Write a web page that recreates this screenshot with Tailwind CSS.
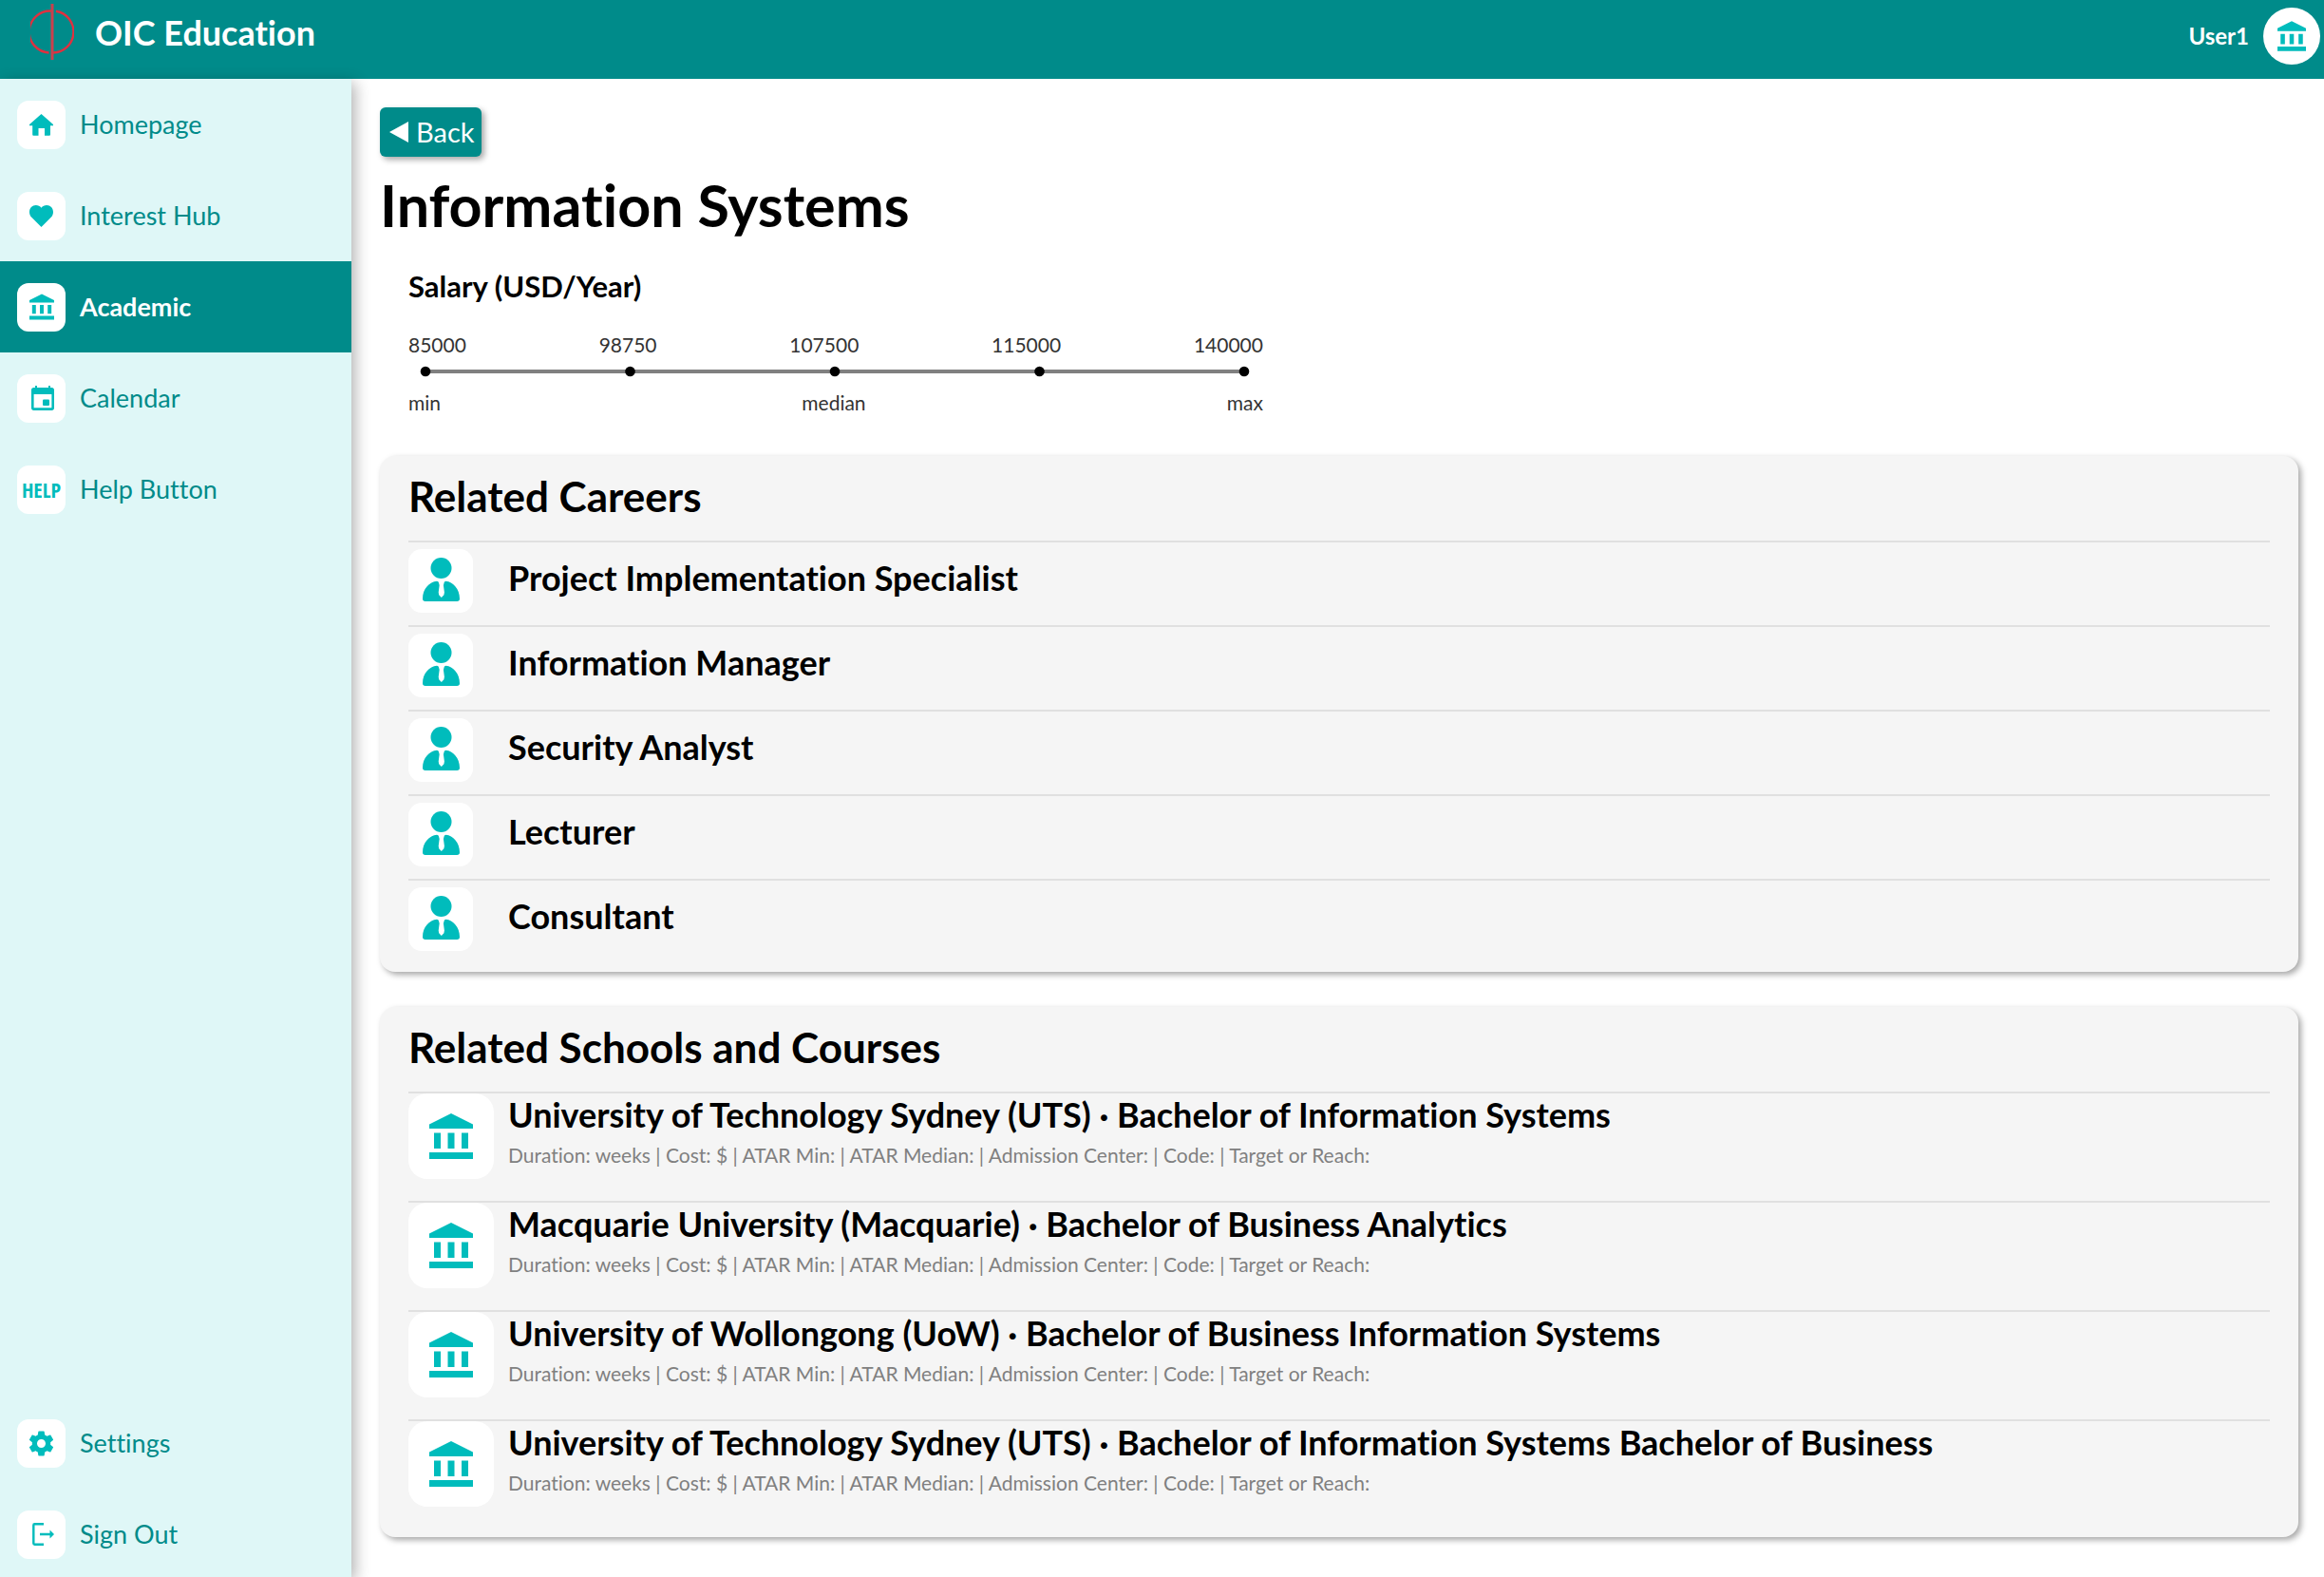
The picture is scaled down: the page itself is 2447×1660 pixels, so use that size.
<!DOCTYPE html>
<html lang="en">
<head>
<meta charset="utf-8">
<meta name="viewport" content="width=device-width, initial-scale=1">
<title>OIC Education</title>
<script src="https://cdn.jsdelivr.net/npm/@tailwindcss/browser@4"></script>
</head>
<body class="flex min-h-screen flex-col overflow-hidden bg-white font-['Lato',sans-serif] text-black [font-variant-ligatures:none]">

<!-- Shared icons -->
<svg class="hidden" aria-hidden="true">
  <symbol id="bank" viewBox="0 0 46 48">
    <path fill="#00bcbc" d="M23 0 46 11.500V16H0v-4.500zM5 20.500h7V37H5zM19.500 20.500h7V37h-7zM34 20.500h7V37h-7zM0 41h46v7H0z"/>
  </symbol>
  <symbol id="person" viewBox="0 0 39 46">
    <circle cx="19.500" cy="11" r="11" fill="#00bcbc"/>
    <path fill="#00bcbc" d="M15 24.800c1 0 1.800.7 2 1.700l.7 2.500-1 7.500.5 2.800 2.600 2.700 2.600-2.700.5-2.800-1-7.500.7-2.500c.2-1 1-1.700 2-1.700C32 25.500 39 33 39 43.200c0 1.700-1.100 2.800-2.800 2.800H2.800C1.100 46 0 44.900 0 43.200 0 33 7 25.500 15 24.800z"/>
  </symbol>
</svg>

<header class="flex h-[83px] shrink-0 justify-between bg-[#008b8a] pr-1 pl-8 text-white">
  <a href="#" class="flex h-[68px] items-center gap-[22px]">
    <svg class="h-[60px] w-[46px]" viewBox="0 0 46 60" fill="none" aria-hidden="true">
      <path d="M22 7.500A22 22 0 0 0 19.500 51.500M27 7.800A22 22 0 0 1 24 51.500" stroke="#e0303f" stroke-width="2.400"/>
      <path d="M23 0v59" stroke="#c9404d" stroke-width="3"/>
    </svg>
    <span class="text-4xl font-bold">OIC Education</span>
  </a>
  <a href="#" class="flex h-[76px] items-center gap-[15px]">
    <span class="text-2xl font-bold">User1</span>
    <span class="flex size-[60px] items-center justify-center rounded-full bg-white">
      <svg class="h-8 w-[30px]" aria-hidden="true"><use href="#bank"/></svg>
    </span>
  </a>
</header>

<div class="flex flex-1">
  <nav class="relative z-10 flex w-[370px] shrink-0 flex-col justify-between bg-[#dff7f7] text-[27px] text-[#008b8a] shadow-[4px_4px_15px_rgba(0,0,0,0.3)]">
    <ul>
      <li><a href="#" class="flex h-24 items-center gap-[15px] pl-[18px]">
        <span class="flex size-[51px] items-center justify-center rounded-xl bg-white">
          <svg class="h-[23px] w-[25px]" viewBox="0 0 25 23" fill="#00bcbc" aria-hidden="true"><path d="M12.500 0 25 11v1.200h-3V21.500c0 .8-.5 1.300-1.300 1.300H16V15H9.500v7.800H4.500c-.8 0-1.300-.5-1.300-1.300V12.200H0V11z"/></svg>
        </span>Homepage</a></li>
      <li><a href="#" class="flex h-24 items-center gap-[15px] pl-[18px]">
        <span class="flex size-[51px] items-center justify-center rounded-xl bg-white">
          <svg class="h-[23px] w-[25px]" viewBox="0 0 25 23" fill="#00bcbc" aria-hidden="true"><path d="M12.500 23 2.300 12.800C.8 11.300 0 9.300 0 7.200 0 3 3 0 6.800 0c2.300 0 4.400 1 5.700 2.800C13.800 1 15.900 0 18.200 0 22 0 25 3 25 7.200c0 2.100-.8 4.100-2.300 5.600z"/></svg>
        </span>Interest Hub</a></li>
      <li><a href="#" aria-current="page" class="flex h-24 items-center gap-[15px] bg-[#008b8a] pl-[18px] font-bold text-white">
        <span class="flex size-[51px] items-center justify-center rounded-xl bg-white">
          <svg class="h-7 w-[26px]" aria-hidden="true"><use href="#bank"/></svg>
        </span>Academic</a></li>
      <li><a href="#" class="flex h-24 items-center gap-[15px] pl-[18px]">
        <span class="flex size-[51px] items-center justify-center rounded-xl bg-white pl-0.5">
          <svg class="h-[26px] w-6" viewBox="0 0 24 26" fill="#00bcbc" aria-hidden="true"><path fill-rule="evenodd" d="M4 0h2v2h12V0h2v2h1.500C23 2 24 3 24 4.500v19c0 1.500-1 2.500-2.500 2.500h-19C1 26 0 25 0 23.500v-19C0 3 1 2 2.500 2H4zM2.600 9v14.200h18.800V9z"/><rect x="12" y="14.500" width="7" height="6.500" rx="1"/></svg>
        </span>Calendar</a></li>
      <li><a href="#" class="flex h-24 items-center gap-[15px] pl-[18px]">
        <span class="flex size-[51px] items-center justify-center rounded-xl bg-white font-['Open_Sans_Condensed','Open_Sans',sans-serif] text-[22px] font-extrabold text-[#00bcbc]" aria-hidden="true">HELP</span>Help Button</a></li>
    </ul>
    <ul class="-mb-[3px]">
      <li><a href="#" class="flex h-24 items-center gap-[15px] pl-[18px]">
        <span class="flex size-[51px] items-center justify-center rounded-xl bg-white">
          <svg class="size-[31px]" viewBox="0 0 24 24" fill="#00bcbc" aria-hidden="true"><path d="M19.430 12.980c.04-.32.07-.64.07-.98s-.03-.66-.07-.98l2.110-1.650c.19-.15.24-.42.12-.64l-2-3.460c-.12-.22-.39-.3-.61-.22l-2.490 1c-.52-.4-1.080-.73-1.690-.98l-.38-2.650C14.460 2.180 14.250 2 14 2h-4c-.25 0-.46.18-.49.42l-.38 2.650c-.61.25-1.170.59-1.690.98l-2.490-1c-.23-.09-.49 0-.61.22l-2 3.460c-.13.22-.07.49.12.64l2.110 1.650c-.04.32-.07.65-.07.98s.03.66.07.98l-2.110 1.650c-.19.15-.24.42-.12.64l2 3.460c.12.22.39.3.61.22l2.490-1c.52.4 1.080.73 1.690.98l.38 2.650c.03.24.24.42.49.42h4c.25 0 .46-.18.49-.42l.38-2.650c.61-.25 1.170-.59 1.690-.98l2.490 1c.23.09.49 0 .61-.22l2-3.460c.12-.22.07-.49-.12-.64l-2.110-1.650zM12 15.500c-1.930 0-3.500-1.570-3.500-3.500s1.570-3.500 3.500-3.500 3.500 1.570 3.500 3.500-1.570 3.500-3.500 3.500z"/></svg>
        </span>Settings</a></li>
      <li><a href="#" class="flex h-24 items-center gap-[15px] pl-[18px]">
        <span class="flex size-[51px] items-center justify-center rounded-xl bg-white pl-1">
          <svg class="h-6 w-[23px]" viewBox="0 0 23 24" fill="none" stroke="#00bcbc" stroke-width="2.400" aria-hidden="true"><path d="M12 1.200H2.500c-.8 0-1.200.5-1.200 1.200v19.200c0 .7.4 1.200 1.200 1.200H12M8 12h11"/><path d="M18.500 7.500 23 12l-4.500 4.500z" fill="#00bcbc" stroke="none"/></svg>
        </span>Sign Out</a></li>
    </ul>
  </nav>

  <main class="min-w-0 flex-1 pt-[30px] pr-[27px] pb-10 pl-[30px]">
    <button type="button" class="flex h-[52px] items-center gap-2 rounded-md bg-[#008b8a] pr-[7px] pl-[10px] text-[29px]/[50px] text-white shadow-[3px_3px_6px_rgba(0,0,0,0.35)]">
      <svg class="h-[22px] w-5" viewBox="0 0 20 22" fill="#fff" aria-hidden="true"><path d="M20 0v22L0 11z"/></svg>Back
    </button>

    <h1 class="mt-[15px] text-[61px]/[72px] font-bold">Information Systems</h1>

    <section class="mt-[31px] max-w-[960px] px-[30px] text-[21px]/[26px] text-[#333]">
      <h2 class="text-[31px]/[36px] font-bold text-black">Salary (USD/Year)</h2>
      <div class="mt-[31px] flex justify-between"><span>85000</span><span>98750</span><span>107500</span><span>115000</span><span>140000</span></div>
      <svg class="mt-[9px] h-3 w-full" viewBox="0 0 900 12" aria-hidden="true">
        <path d="M18 6h862" stroke="#808080" stroke-width="4"/>
        <circle cx="18" cy="6" r="5.300"/><circle cx="233.500" cy="6" r="5.300"/><circle cx="449" cy="6" r="5.300"/><circle cx="664.500" cy="6" r="5.300"/><circle cx="880" cy="6" r="5.300"/>
      </svg>
      <div class="mt-[14px] flex justify-between"><span>min</span><span>median</span><span>max</span></div>
    </section>

    <section class="mt-[43px] rounded-2xl bg-[#f5f5f5] px-[30px] pb-[9px] shadow-[3px_3px_6px_rgba(0,0,0,0.35)]">
      <h2 class="mb-[5px] text-[44px]/[84px] font-bold">Related Careers</h2>
      <ul class="text-4xl/[74px] font-bold">
        <li class="flex h-[89px] gap-[37px] border-t-2 border-[#e0e0e0]">
          <span class="mt-[7px] flex h-[67px] w-[68px] justify-center rounded-[14px] bg-white pt-[9px]"><svg class="h-[46px] w-[39px]" aria-hidden="true"><use href="#person"/></svg></span>
          <h3>Project Implementation Specialist</h3>
        </li>
        <li class="flex h-[89px] gap-[37px] border-t-2 border-[#e0e0e0]">
          <span class="mt-[7px] flex h-[67px] w-[68px] justify-center rounded-[14px] bg-white pt-[9px]"><svg class="h-[46px] w-[39px]" aria-hidden="true"><use href="#person"/></svg></span>
          <h3>Information Manager</h3>
        </li>
        <li class="flex h-[89px] gap-[37px] border-t-2 border-[#e0e0e0]">
          <span class="mt-[7px] flex h-[67px] w-[68px] justify-center rounded-[14px] bg-white pt-[9px]"><svg class="h-[46px] w-[39px]" aria-hidden="true"><use href="#person"/></svg></span>
          <h3>Security Analyst</h3>
        </li>
        <li class="flex h-[89px] gap-[37px] border-t-2 border-[#e0e0e0]">
          <span class="mt-[7px] flex h-[67px] w-[68px] justify-center rounded-[14px] bg-white pt-[9px]"><svg class="h-[46px] w-[39px]" aria-hidden="true"><use href="#person"/></svg></span>
          <h3>Lecturer</h3>
        </li>
        <li class="flex h-[89px] gap-[37px] border-t-2 border-[#e0e0e0]">
          <span class="mt-[7px] flex h-[67px] w-[68px] justify-center rounded-[14px] bg-white pt-[9px]"><svg class="h-[46px] w-[39px]" aria-hidden="true"><use href="#person"/></svg></span>
          <h3>Consultant</h3>
        </li>
      </ul>
    </section>

    <section class="mt-[37px] rounded-2xl bg-[#f5f5f5] px-[30px] pb-[9px] shadow-[3px_3px_6px_rgba(0,0,0,0.35)]">
      <h2 class="mb-[5px] text-[44px]/[84px] font-bold">Related Schools and Courses</h2>
      <ul>
        <li class="flex h-[115px] gap-[15px] border-t-2 border-[#e0e0e0]">
          <span class="flex size-[90px] items-center justify-center rounded-[20px] bg-white"><svg class="h-12 w-[46px]" aria-hidden="true"><use href="#bank"/></svg></span>
          <div><h3 class="text-4xl/[44px] font-bold">University of Technology Sydney (UTS) · Bachelor of Information Systems</h3><p class="text-[21px]/[42px] text-[#808080]">Duration: weeks | Cost: $ | ATAR Min: | ATAR Median: | Admission Center: | Code: | Target or Reach:</p></div>
        </li>
        <li class="flex h-[115px] gap-[15px] border-t-2 border-[#e0e0e0]">
          <span class="flex size-[90px] items-center justify-center rounded-[20px] bg-white"><svg class="h-12 w-[46px]" aria-hidden="true"><use href="#bank"/></svg></span>
          <div><h3 class="text-4xl/[44px] font-bold">Macquarie University (Macquarie) · Bachelor of Business Analytics</h3><p class="text-[21px]/[42px] text-[#808080]">Duration: weeks | Cost: $ | ATAR Min: | ATAR Median: | Admission Center: | Code: | Target or Reach:</p></div>
        </li>
        <li class="flex h-[115px] gap-[15px] border-t-2 border-[#e0e0e0]">
          <span class="flex size-[90px] items-center justify-center rounded-[20px] bg-white"><svg class="h-12 w-[46px]" aria-hidden="true"><use href="#bank"/></svg></span>
          <div><h3 class="text-4xl/[44px] font-bold">University of Wollongong (UoW) · Bachelor of Business Information Systems</h3><p class="text-[21px]/[42px] text-[#808080]">Duration: weeks | Cost: $ | ATAR Min: | ATAR Median: | Admission Center: | Code: | Target or Reach:</p></div>
        </li>
        <li class="flex h-[115px] gap-[15px] border-t-2 border-[#e0e0e0]">
          <span class="flex size-[90px] items-center justify-center rounded-[20px] bg-white"><svg class="h-12 w-[46px]" aria-hidden="true"><use href="#bank"/></svg></span>
          <div><h3 class="text-4xl/[44px] font-bold">University of Technology Sydney (UTS) · Bachelor of Information Systems Bachelor of Business</h3><p class="text-[21px]/[42px] text-[#808080]">Duration: weeks | Cost: $ | ATAR Min: | ATAR Median: | Admission Center: | Code: | Target or Reach:</p></div>
        </li>
      </ul>
    </section>
  </main>
</div>
</body>
</html>
